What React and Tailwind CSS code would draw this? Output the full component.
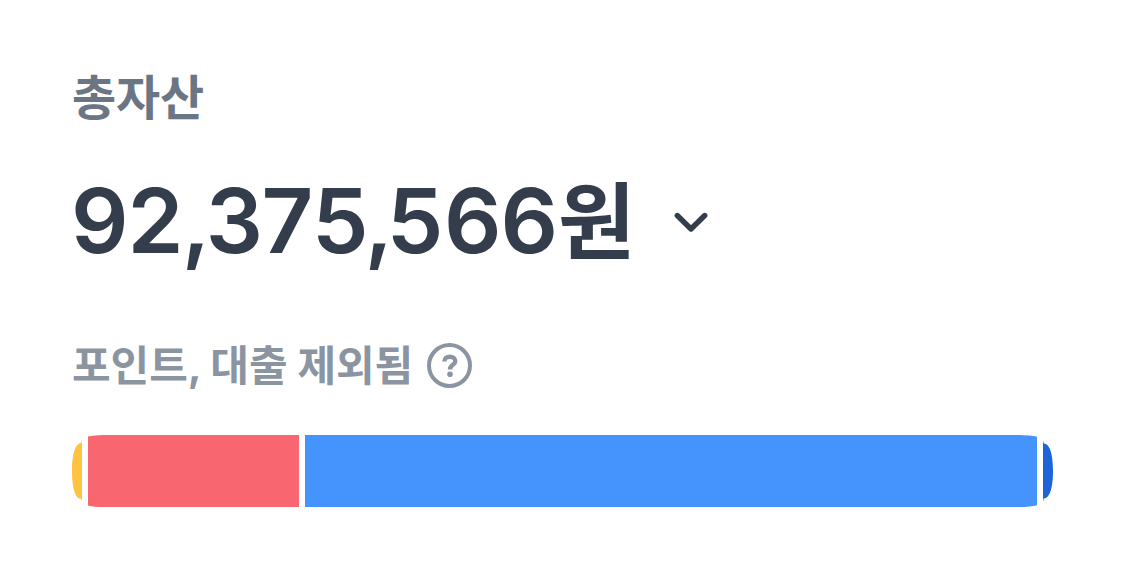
import React from 'react';

// The bar ends are squircle-like, so each segment is clipped to its own outline.
const segments = [
  {
    id: 'points',
    className: "w-[10px] bg-[#ffc342] [clip-path:path('M10_5_L9.3_8_C3_8_0_20_0_36_C0_52_3_64_9.3_64_L10_67_Z')]",
  },
  {
    id: 'spending',
    className: "w-[211px] bg-[#f86670] [clip-path:path('M0_1.6_Q6_0_16_0_H211_V72_H16_Q6_72_0_70.4_Z')]",
  },
  {
    id: 'savings',
    className: "w-[732px] bg-[#4593fc] [clip-path:path('M0_0_H714_Q726_0_732_1.8_V70.2_Q726_72_714_72_H0_Z')]",
  },
  {
    id: 'stocks',
    className: "w-[10px] bg-[#1b64da] [clip-path:path('M0_5_L0.7_8.5_C7_8.5_10_20_10_36_C10_52_7_63.5_0.7_63.5_L0_67_Z')]",
  },
];

const ChevronDown = () => (
  <svg className="ml-[40px] mt-1 h-[22px] w-[34px]" viewBox="0 0 34 22" fill="none">
    <path d="M3.3 3.5 L17 17 L30.7 3.5" stroke="#333d4b" strokeWidth="5.4" strokeLinecap="round" strokeLinejoin="round" />
  </svg>
);

const HelpIcon = () => (
  <div className="mb-px ml-[14px] flex size-[45px] items-center justify-center rounded-full border-[4px] border-[#8b95a1]">
    <svg className="size-[30px]" viewBox="0 0 30 30" fill="none">
      <path
        d="M9.4 10.4 C9.4 7.6 11.7 5.8 14.8 5.8 C18 5.8 20.3 7.6 20.3 10.3 C20.3 14 15 13.8 15 18.4"
        stroke="#8b95a1"
        strokeWidth="4.4"
      />
      <circle cx="15" cy="23.2" r="2.8" fill="#8b95a1" />
    </svg>
  </div>
);

const App = () => {
  return (
    <main className="h-[565px] w-[1125px] overflow-hidden bg-white px-[72px] pt-[66px] font-['Inter','Noto_Sans_CJK_KR',sans-serif] whitespace-nowrap">
      <h2 className="h-[64px] text-[48px] leading-[64px] font-bold tracking-[-0.2px] text-[#6b7684]">총자산</h2>
      <div className="mt-[38px] flex h-[106px] items-center text-[#333d4b]">
        <span className="-ml-px h-[106px] text-[90px] leading-[105px] font-semibold tracking-[-1px]">
          9<span className="tracking-[-2px]">2</span>
          <span className="tracking-[-4.5px]">,</span>
          <span className="tracking-[-1.5px]">37</span>
          <span className="tracking-[-4px]">5</span>
          <span className="tracking-[-6.5px]">,</span>
          <span className="tracking-[0.5px]">5</span>66
          <span className="ml-px text-[84px] leading-none font-bold">원</span>
        </span>
        <ChevronDown />
      </div>
      <div className="mt-[62px] flex h-[60px] items-center">
        <span className="text-[42px] leading-[60px] font-bold tracking-[-0.05px] text-[#8b95a1]">포인트, 대출 제외됨</span>
        <HelpIcon />
      </div>
      <div className="mt-[39px] flex h-[72px] w-[981px] gap-[6px]">
        {segments.map((segment) => (
          <div key={segment.id} className={segment.className} />
        ))}
      </div>
    </main>
  );
};

export default App;
